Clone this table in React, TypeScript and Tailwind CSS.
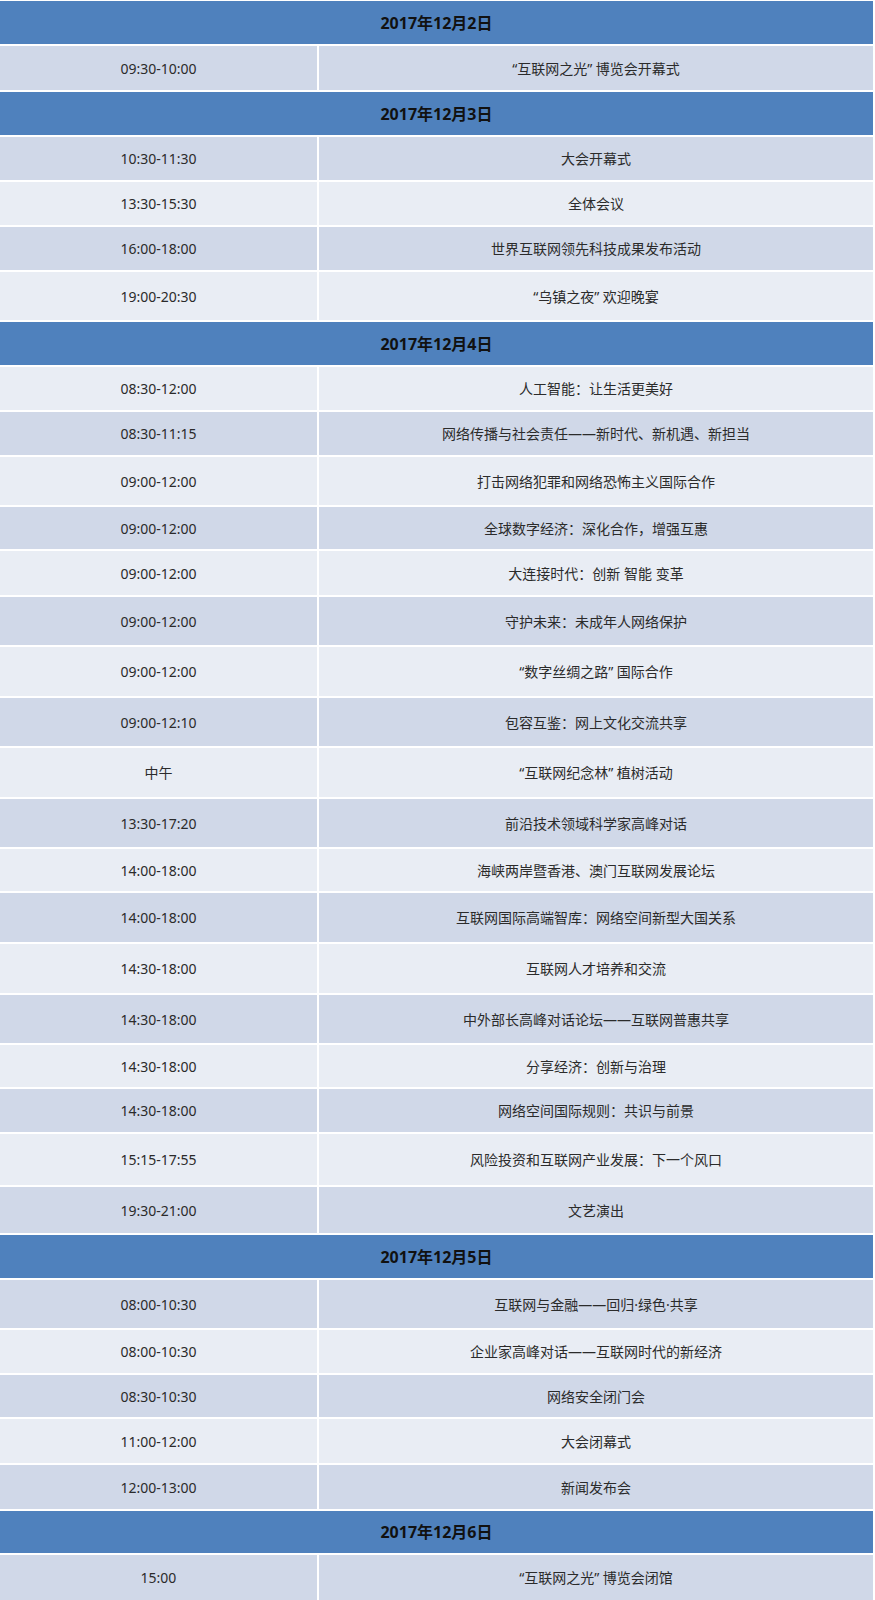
type Row =
  | { kind: "date"; label: string; h: string }
  | { kind: "item"; time: string; title: string; h: string; dark: boolean };

const rows: Row[] = [
  { kind: "date", label: "2017年12月2日", h: "h-[43px]" },
  { kind: "item", time: "09:30-10:00", title: "“互联网之光” 博览会开幕式", h: "h-[44px]", dark: true },
  { kind: "date", label: "2017年12月3日", h: "h-[43px]" },
  { kind: "item", time: "10:30-11:30", title: "大会开幕式", h: "h-[43px]", dark: true },
  { kind: "item", time: "13:30-15:30", title: "全体会议", h: "h-[43px]", dark: false },
  { kind: "item", time: "16:00-18:00", title: "世界互联网领先科技成果发布活动", h: "h-[43px]", dark: true },
  { kind: "item", time: "19:00-20:30", title: "“乌镇之夜” 欢迎晚宴", h: "h-[48px]", dark: false },
  { kind: "date", label: "2017年12月4日", h: "h-[43px]" },
  { kind: "item", time: "08:30-12:00", title: "人工智能：让生活更美好", h: "h-[43px]", dark: false },
  { kind: "item", time: "08:30-11:15", title: "网络传播与社会责任——新时代、新机遇、新担当", h: "h-[43px]", dark: true },
  { kind: "item", time: "09:00-12:00", title: "打击网络犯罪和网络恐怖主义国际合作", h: "h-[48px]", dark: false },
  { kind: "item", time: "09:00-12:00", title: "全球数字经济：深化合作，增强互惠", h: "h-[42px]", dark: true },
  { kind: "item", time: "09:00-12:00", title: "大连接时代：创新 智能 变革", h: "h-[44px]", dark: false },
  { kind: "item", time: "09:00-12:00", title: "守护未来：未成年人网络保护", h: "h-[48px]", dark: true },
  { kind: "item", time: "09:00-12:00", title: "“数字丝绸之路” 国际合作", h: "h-[49px]", dark: false },
  { kind: "item", time: "09:00-12:10", title: "包容互鉴：网上文化交流共享", h: "h-[48px]", dark: true },
  { kind: "item", time: "中午", title: "“互联网纪念林” 植树活动", h: "h-[49px]", dark: false },
  { kind: "item", time: "13:30-17:20", title: "前沿技术领域科学家高峰对话", h: "h-[48px]", dark: true },
  { kind: "item", time: "14:00-18:00", title: "海峡两岸暨香港、澳门互联网发展论坛", h: "h-[42px]", dark: false },
  { kind: "item", time: "14:00-18:00", title: "互联网国际高端智库：网络空间新型大国关系", h: "h-[49px]", dark: true },
  { kind: "item", time: "14:30-18:00", title: "互联网人才培养和交流", h: "h-[49px]", dark: false },
  { kind: "item", time: "14:30-18:00", title: "中外部长高峰对话论坛——互联网普惠共享", h: "h-[48px]", dark: true },
  { kind: "item", time: "14:30-18:00", title: "分享经济：创新与治理", h: "h-[42px]", dark: false },
  { kind: "item", time: "14:30-18:00", title: "网络空间国际规则：共识与前景", h: "h-[43px]", dark: true },
  { kind: "item", time: "15:15-17:55", title: "风险投资和互联网产业发展：下一个风口", h: "h-[51px]", dark: false },
  { kind: "item", time: "19:30-21:00", title: "文艺演出", h: "h-[46px]", dark: true },
  { kind: "date", label: "2017年12月5日", h: "h-[43px]" },
  { kind: "item", time: "08:00-10:30", title: "互联网与金融——回归·绿色·共享", h: "h-[48px]", dark: true },
  { kind: "item", time: "08:00-10:30", title: "企业家高峰对话——互联网时代的新经济", h: "h-[43px]", dark: false },
  { kind: "item", time: "08:30-10:30", title: "网络安全闭门会", h: "h-[42px]", dark: true },
  { kind: "item", time: "11:00-12:00", title: "大会闭幕式", h: "h-[44px]", dark: false },
  { kind: "item", time: "12:00-13:00", title: "新闻发布会", h: "h-[44px]", dark: true },
  { kind: "date", label: "2017年12月6日", h: "h-[42px]" },
  { kind: "item", time: "15:00", title: "“互联网之光” 博览会闭馆", h: "h-[45px]", dark: true },
];

export default function App() {
  return (
    <div className="w-[875px] bg-white pt-[1px] pr-[2px] font-['Noto_Sans','Noto_Sans_CJK_SC',sans-serif] text-[14px] text-[#2b2b2b]">
      <div className="flex flex-col gap-[2px]">
        {rows.map((row, i) =>
          row.kind === "date" ? (
            <div
              key={i}
              className={`${row.h} flex items-center justify-center bg-[#4f81bd] text-[16px] font-bold text-[#111]`}
            >
              {row.label}
            </div>
          ) : (
            <div key={i} className={`${row.h} grid grid-cols-[317px_1fr] gap-[2px]`}>
              <div
                className={`flex items-center justify-center ${row.dark ? "bg-[#d0d8e8]" : "bg-[#e9edf4]"}`}
              >
                {row.time}
              </div>
              <div
                className={`flex items-center justify-center ${row.dark ? "bg-[#d0d8e8]" : "bg-[#e9edf4]"}`}
              >
                {row.title}
              </div>
            </div>
          )
        )}
      </div>
    </div>
  );
}
